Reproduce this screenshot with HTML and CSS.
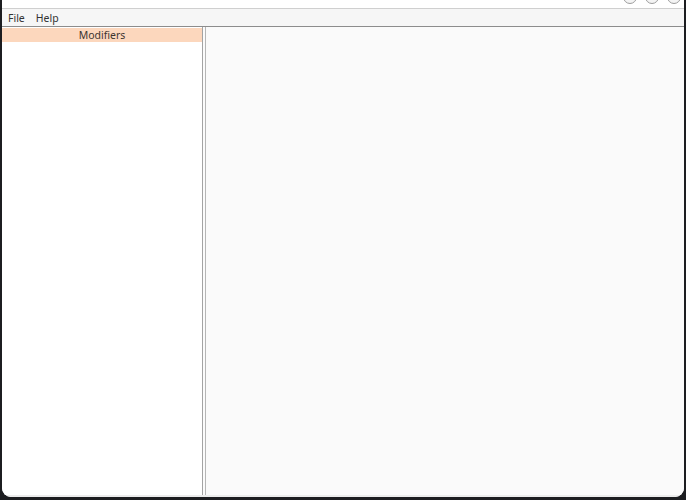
FILE: index.html
```html
<!DOCTYPE html>
<html lang="en">
<head>
    <meta charset="UTF-8">
    <meta name="viewport" content="width=device-width, initial-scale=1.0">
    <title>Modifiers</title>
    <link rel="stylesheet" href="styles.css">
</head>
<body>
    <div class="window">
        <div class="titlebar">
            <span class="winbtn"></span>
            <span class="winbtn"></span>
            <span class="winbtn"></span>
        </div>
        <div class="menubar">
            <span class="menu">File</span>
            <span class="menu">Help</span>
        </div>
        <div class="main">
            <div class="leftpane">
                <div class="header">Modifiers</div>
            </div>
            <div class="splitter"></div>
            <div class="rightpane"></div>
        </div>
    </div>
</body>
</html>
```

FILE: styles.css
```css
* {margin: 0; padding: 0; box-sizing: border-box;}
body {
    width: 686px;
    height: 500px;
    background-color: #1c1d20;
    font-family: "Noto Sans", "DejaVu Sans", sans-serif;
    font-size: 10.5px;
    color: #3a3a3a;
    overflow: hidden;
}
.window {
    margin-left: 2px;
    width: 682px;
    height: 497px;
    background-color: #ffffff;
    border-radius: 0 0 9px 9px;
    overflow: hidden;
    display: flex;
    flex-direction: column;
}
.titlebar {
    height: 9px;
    flex-shrink: 0;
    background-color: #ffffff;
    border-bottom: 1px solid #cfcfcf;
    display: flex;
    justify-content: flex-end;
    align-items: flex-start;
    gap: 8px;
    padding-right: 3px;
    overflow: hidden;
}
.winbtn {
    width: 14px;
    height: 14px;
    margin-top: -10px;
    border-radius: 50%;
    border: 1px solid #9d9d9d;
    background-color: #f4f4f4;
    flex-shrink: 0;
}
.menubar {
    height: 18px;
    flex-shrink: 0;
    background-color: #f6f6f6;
    border-bottom: 1px solid #8c8c8c;
    display: flex;
    align-items: center;
    padding-left: 6px;
    gap: 11px;
}
.menu {
    line-height: 16px;
    color: #333333;
}
.main {
    flex: 1;
    display: flex;
    border-bottom: 2px solid #ececec;
}
.leftpane {
    width: 200px;
    background-color: #ffffff;
}
.header {
    margin-top: 1px;
    height: 14px;
    line-height: 14px;
    text-align: center;
    background-color: #fcd7bd;
    color: #3d3530;
}
.splitter {
    width: 4px;
    border-left: 1px solid #a3a3a3;
    border-right: 1px solid #b5b5b5;
    background-color: #fbfbfb;
}
.rightpane {
    flex: 1;
    background-color: #fafafa;
}
```
